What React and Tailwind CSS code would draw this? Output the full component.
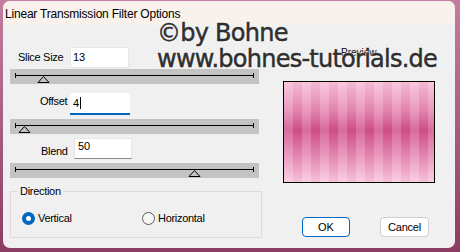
import React from 'react';

const sliders = [
  { thumb: 33 },
  { thumb: 14 },
  { thumb: 184 },
];

const SliderStrip = ({ thumb }) => (
  <div className="h-[15px] w-[249px] bg-[#c3c3c3]">
    <svg width="249" height="15" viewBox="0 0 249 15" className="block">
      <line x1="5" y1="6.5" x2="244" y2="6.5" stroke="#000" strokeWidth="1" />
      <line x1="5.5" y1="4" x2="5.5" y2="9" stroke="#000" strokeWidth="1" />
      <line x1="243.5" y1="4" x2="243.5" y2="9" stroke="#000" strokeWidth="1" />
      <polygon
        points={`${thumb + 0.5},7.5 ${thumb - 5},13.5 ${thumb + 6},13.5`}
        fill="#c3c3c3"
        stroke="#000"
        strokeWidth="1"
      />
    </svg>
  </div>
);

const App = () => {
  return (
    <div className="h-[252px] w-[460px] overflow-hidden bg-[linear-gradient(180deg,#c47d9f,#8c3c62)] pl-[3px] pt-[1px] font-['Liberation_Sans',sans-serif] text-black">
      <div className="relative h-[247px] w-[452px] overflow-hidden rounded-[7px] bg-[#f0f0f0]">
        {/* title bar */}
        <div className="flex h-[24px] items-center bg-[#f9f1ec] pl-[2px] pt-[2px] text-[12px] tracking-[-0.2px]">
          Linear Transmission Filter Options
        </div>

        <div className="flex h-[223px]">
          {/* left column */}
          <div className="w-[267px] pl-[7px]">
            <div className="mt-[22px] flex h-[21px] items-start">
              <span className="ml-[8px] mt-[4px] w-[52px] text-[11px] leading-[13px] tracking-[-0.3px]">Slice Size</span>
              <div className="flex h-[21px] w-[59px] items-start border border-[#e6e6e6] bg-white pl-[2px] pt-[3px] text-[11px] leading-[13px]">
                13
              </div>
            </div>
            <div className="mt-px">
              <SliderStrip thumb={sliders[0].thumb} />
            </div>

            <div className="mt-[9px] flex h-[22px] items-start">
              <span className="ml-[30px] mt-[2px] w-[30px] text-[11px] leading-[13px] tracking-[-0.3px]">Offset</span>
              <div className="flex h-[22px] w-[60px] items-center border-b-2 border-[#0067c0] bg-white pl-[3px] text-[11px] leading-[13px]">
                4<span className="ml-[1px] h-[12px] w-px bg-black" />
              </div>
            </div>
            <div className="mt-[4px]">
              <SliderStrip thumb={sliders[1].thumb} />
            </div>

            <div className="mt-[4px] flex h-[21px] items-start">
              <span className="ml-[31px] mt-[7px] w-[33px] text-[11px] leading-[13px] tracking-[-0.3px]">Blend</span>
              <div className="flex h-[21px] w-[58px] items-start border border-[#e6e6e6] border-b-[#8a8a8a] bg-white pl-[3px] pt-[1px] text-[11px] leading-[13px]">
                50
              </div>
            </div>
            <div className="mt-[4px]">
              <SliderStrip thumb={sliders[2].thumb} />
            </div>

            <fieldset className="mt-[7px] h-[53px] w-[252px] border border-[#dcdcdc] px-[7px]">
              <legend className="px-[2px] text-[11px] leading-[13px] tracking-[-0.3px]">Direction</legend>
              <div className="mt-[14px] flex h-[13px] items-center text-[11px] leading-[13px] tracking-[-0.3px]">
                <div className="ml-[4px] flex w-[120px] items-center">
                  <span className="flex h-[13px] w-[13px] items-center justify-center rounded-full bg-[#0067c0]">
                    <span className="h-[5px] w-[5px] rounded-full bg-white" />
                  </span>
                  <span className="ml-[3px]">Vertical</span>
                </div>
                <div className="flex items-center">
                  <span className="h-[13px] w-[13px] rounded-full border border-[#5c5c5c] bg-[#f7f7f7]" />
                  <span className="ml-[3px]">Horizontal</span>
                </div>
              </div>
            </fieldset>
          </div>

          {/* right column */}
          <div className="flex flex-col">
            <span className="ml-[71px] mt-[23px] text-[10px] leading-[10px]">Preview</span>
            <div className="ml-[13px] mt-[23px] h-[102px] w-[152px] border border-black bg-[repeating-linear-gradient(90deg,rgba(255,255,255,0.16)_0_9px,rgba(0,0,0,0.02)_9px_18px),linear-gradient(180deg,#f9bdd8_0%,#e687b2_28%,#d24f8a_48%,#e584b0_72%,#fbc4dd_100%)]" />
            <div className="ml-[32px] mt-[34px] flex">
              <button className="flex h-[20px] w-[48px] items-center justify-center rounded-[4px] border border-[#0067c0] bg-white text-[11px]">
                OK
              </button>
              <button className="ml-[30px] flex h-[20px] w-[49px] items-center justify-center rounded-[4px] border border-[#cfcfcf] bg-white text-[11px] tracking-[-0.2px]">
                Cancel
              </button>
            </div>
          </div>
        </div>

        {/* watermark */}
        <div className="pointer-events-none absolute left-[154px] top-[19px] font-['DejaVu_Sans',sans-serif] text-[24px] leading-[26px] tracking-[-0.75px] text-[#2f2f2f] [-webkit-text-stroke:0.5px_#2f2f2f] [text-shadow:0_0_2px_#fff,0_0_3px_#fff]">
          <div>©by Bohne</div>
          <div>www.bohnes-tutorials.de</div>
        </div>
      </div>
    </div>
  );
};

export default App;
